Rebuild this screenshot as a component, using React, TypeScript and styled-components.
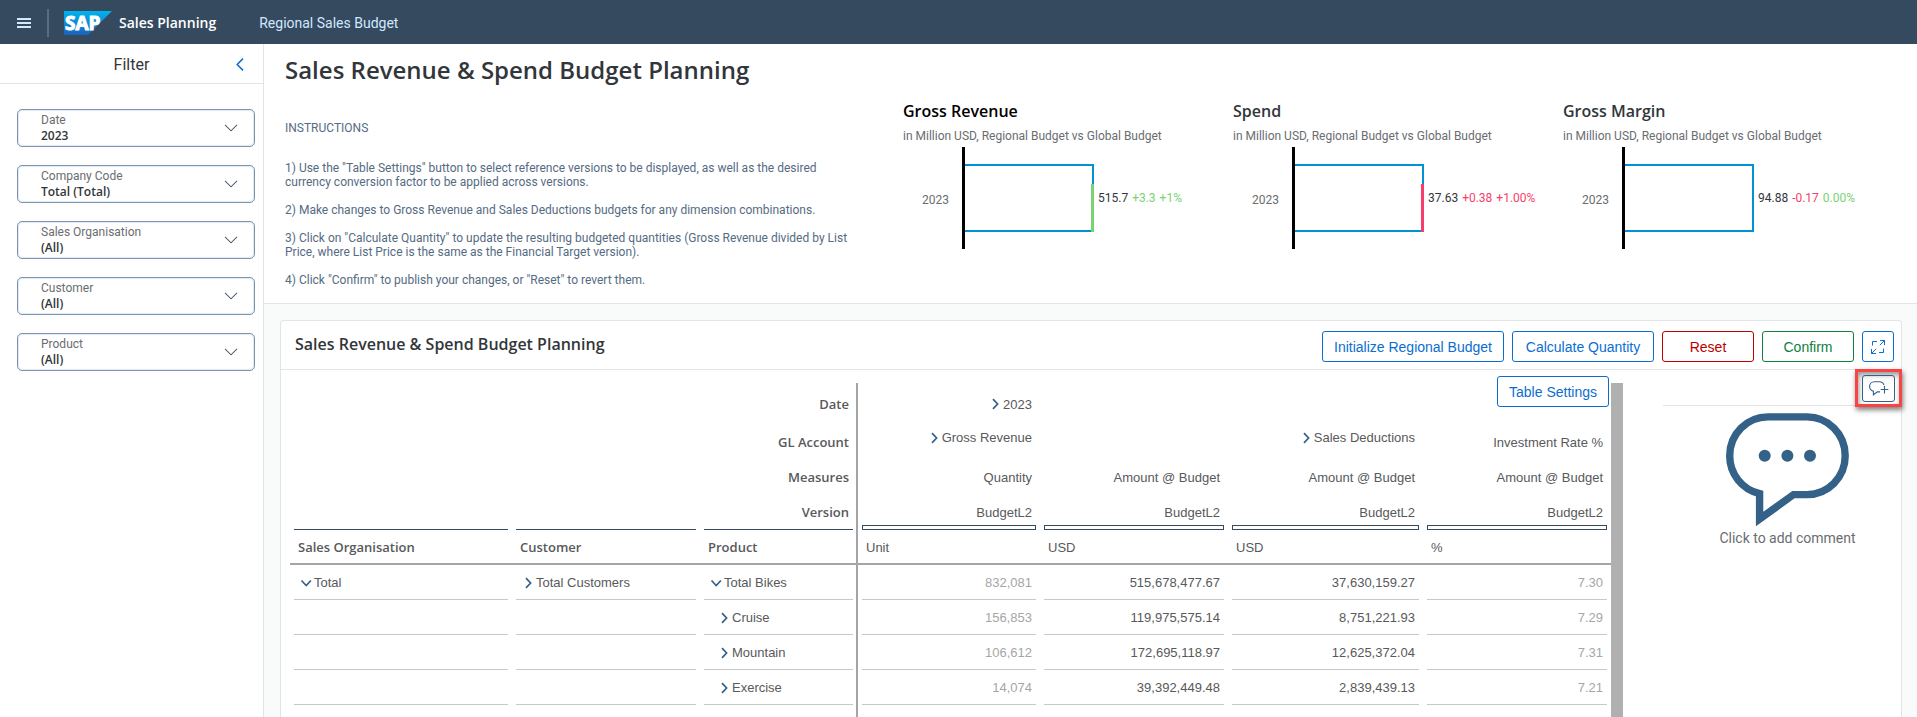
import React from 'react';
import styled, { createGlobalStyle, css } from 'styled-components';

const sans = 'Roboto, "Liberation Sans", sans-serif';
const headline = '"Open Sans", "Noto Sans", sans-serif';
const arial = '"Liberation Sans", Arial, sans-serif';

const color = {
  shell: '#354a5f',
  line: '#e2e4e5',
  canvas: '#f9fbfb',
  text: '#32363a',
  soft: '#6a6d70',
  slate: '#556b82',
  cell: '#58595b',
  muted: '#a6a6a6',
  rule: '#a5a5a5',
  icon: '#346187',
  blue: '#0a6ed1',
  red: '#bb0000',
  green: '#107e3e',
  bar: '#0092d1',
  good: '#7bd272',
  bad: '#f53f6a',
};

const GlobalStyle = createGlobalStyle`
  *, *::before, *::after { box-sizing: border-box; }
  body { margin: 0; background: ${color.canvas}; color: ${color.text}; font-family: ${sans}; }
  h1, h2, h3, p { margin: 0; }
  button, select { font: inherit; cursor: pointer; }
  svg { display: block; flex: none; }
`;

/* Shell bar */

const Page = styled.div`
  display: flex;
  flex-direction: column;
  min-height: 100vh;
`;

const ShellBar = styled.header`
  display: flex;
  align-items: center;
  height: 44px;
  padding: 2px 16px 0;
  background: ${color.shell};
`;

const MenuButton = styled.button`
  display: flex;
  padding: 1px;
  border: 0;
  background: none;
  color: #d1e8ff;
`;

const ShellDivider = styled.span`
  width: 2px;
  height: 28px;
  margin: 0 15px 0 15px;
  background: #5b6c7e;
`;

const ProductName = styled.span`
  margin-left: 7px;
  color: #fff;
  font: 600 14px/20px ${headline};
`;

const StoryName = styled.span`
  margin-left: 43px;
  color: #d1e8ff;
  font-size: 14px;
  line-height: 20px;
`;

const Workspace = styled.div`
  display: flex;
  flex: 1;
`;

/* Filter panel */

const Sidebar = styled.aside`
  flex: none;
  width: 264px;
  border-right: 1px solid ${color.line};
  background: #fff;
`;

const SidebarHeader = styled.div`
  display: grid;
  grid-template-columns: 1fr auto 1fr;
  align-items: center;
  height: 40px;
  padding: 3px 17px 0;
  border-bottom: 1px solid ${color.line};
`;

const SidebarTitle = styled.h2`
  grid-column: 2;
  font-size: 16px;
  font-weight: 400;
  line-height: 24px;
`;

const CollapseButton = styled.button`
  justify-self: end;
  padding: 0 2px 2px 0;
  border: 0;
  background: none;
  color: ${color.blue};
`;

const FilterList = styled.div`
  display: flex;
  flex-direction: column;
  gap: 18px;
  padding: 25px 8px 25px 17px;
`;

const FilterBox = styled.label`
  display: flex;
  align-items: center;
  height: 38px;
  padding: 0 16px 0 23px;
  border: 1px solid #7f93a8;
  border-radius: 5px;
  box-shadow: inset 0 0 1px 1px #dfeaf4;
  color: #51606f;
`;

const FilterText = styled.span`
  display: flex;
  flex: 1;
  flex-direction: column;
`;

const FilterName = styled.span`
  color: ${color.soft};
  font-size: 12px;
  line-height: 16px;
`;

const FilterSelect = styled.select`
  appearance: none;
  width: 100%;
  height: 16px;
  padding: 0;
  border: 0;
  background: none;
  color: ${color.text};
  font: 600 12px/16px ${headline};
`;

/* Summary */

const Main = styled.main`
  display: flex;
  flex: 1;
  flex-direction: column;
  min-width: 0;
`;

const Summary = styled.section`
  padding: 10px 24px 16px 21px;
  border-bottom: 1px solid ${color.line};
  background: #fff;
`;

const PageTitle = styled.h1`
  font: 600 24px/32px ${headline};
`;

const SummaryBody = styled.div`
  display: flex;
  align-items: flex-start;
`;

const Instructions = styled.div`
  flex: 0 1 618px;
  padding: 35px 40px 0 0;
  color: ${color.slate};
  font-size: 12px;
  line-height: 14px;
`;

const InstructionsLabel = styled.p`
  margin-bottom: 26px;
`;

const Steps = styled.div`
  display: flex;
  flex-direction: column;
  gap: 14px;
`;

const Charts = styled.div`
  display: grid;
  flex: 1;
  grid-template-columns: repeat(3, 1fr);
  padding-top: 15px;
`;

const ChartTitle = styled.h3<{ $dark?: boolean }>`
  color: ${(p) => (p.$dark ? '#000' : color.text)};
  font: 600 16px/20px ${headline};
`;

const ChartSubtitle = styled.p`
  margin: 7px 0 3px;
  color: ${color.soft};
  font-size: 12px;
  line-height: 16px;
`;

const Plot = styled.div`
  display: flex;
  align-items: center;
`;

const Category = styled.span`
  width: 59px;
  padding: 4px 13px 0 0;
  color: ${color.soft};
  font-size: 12px;
  line-height: 16px;
  text-align: right;
`;

const Figures = styled.span`
  display: flex;
  gap: 4px;
  margin-left: 4px;
  font-size: 12px;
  line-height: 16px;
`;

const Figure = styled.span<{ $tone?: 'good' | 'bad' }>`
  color: ${(p) => (p.$tone ? color[p.$tone] : color.text)};
`;

/* Planning card */

const CardArea = styled.div`
  display: flex;
  flex: 1;
  padding: 16px 15px 0 16px;
`;

const Card = styled.section`
  display: flex;
  flex: 1;
  flex-direction: column;
  min-width: 0;
  border: 1px solid ${color.line};
  border-bottom: 0;
  border-radius: 4px 4px 0 0;
  background: #fff;
`;

const CardHeader = styled.div`
  display: flex;
  align-items: flex-start;
  justify-content: space-between;
  height: 49px;
  padding: 10px 7px 0 14px;
  border-bottom: 1px solid ${color.line};
`;

const CardTitle = styled.h2`
  font: 600 16px/26px ${headline};
`;

const Actions = styled.div`
  display: flex;
  gap: 8px;
`;

const buttonWidths = { small: 92, medium: 142 };

const Button = styled.button<{ $tone?: 'red' | 'green'; $size?: keyof typeof buttonWidths }>`
  height: 31px;
  padding: 0 11px;
  border: 1px solid currentColor;
  border-radius: 3px;
  background: #fff;
  color: ${(p) => color[p.$tone ?? 'blue']};
  font: 400 14px/20px ${arial};
  white-space: nowrap;
  ${(p) => p.$size && css`min-width: ${buttonWidths[p.$size]}px;`}
`;

const IconButton = styled(Button)`
  display: flex;
  align-items: center;
  justify-content: center;
  width: 32px;
  padding: 0;
`;

const CardBody = styled.div`
  display: flex;
  flex: 1;
`;

const TableArea = styled.div`
  position: relative;
  flex: 1;
  min-width: 0;
  padding: 13px 0 0 9px;
`;

const TableSettings = styled(Button)`
  position: absolute;
  top: 6px;
  right: 2px;
`;

const ScrollTrack = styled.div`
  width: 12px;
  margin-top: 13px;
  background: #b0b0b0;
`;

const DataTable = styled.table`
  width: 100%;
  border-spacing: 0;
  table-layout: fixed;
  color: ${color.cell};
  font: 400 13px/17px ${arial};
`;

const Cell = styled.td<{ $divider?: boolean; $strong?: boolean; $tall?: boolean }>`
  height: ${(p) => (p.$tall ? 42 : 35)}px;
  padding: 0 ${(p) => (p.$divider ? 3 : 4)}px 0 4px;
  ${(p) => p.$divider && css`border-right: 2px solid ${color.rule};`}
  ${(p) => p.$strong && css`border-bottom: 2px solid ${color.rule};`}
`;

const FillerCell = styled(Cell)`
  height: 12px;
`;

const CellContent = styled.div<{
  $end?: boolean;
  $line?: 'light' | 'dark';
  $muted?: boolean;
  $bold?: boolean;
  $raised?: boolean;
  $boxed?: boolean;
}>`
  display: flex;
  flex-wrap: wrap;
  align-content: ${(p) => (p.$raised ? 'flex-start' : 'center')};
  justify-content: ${(p) => (p.$end ? 'flex-end' : 'flex-start')};
  height: ${(p) => (p.$boxed ? 30 : 35)}px;
  padding: ${(p) => (p.$raised ? 4 : p.$boxed ? 5 : p.$line ? 1 : 0)}px 4px 0;
  ${(p) => p.$line && css`border-bottom: 1px solid ${p.$line === 'dark' ? '#354a5f' : '#c8c8c8'};`}
  ${(p) => p.$muted && css`color: ${color.muted};`}
  ${(p) => p.$bold && css`font: 600 13px/17px ${headline};`}
`;

const HeadContent = styled(CellContent)`
  height: 33px;
  padding-top: 1px;
`;

const VersionBox = styled.div`
  height: 5px;
  border: 1px solid #354a5f;
`;

const Node = styled.span<{ $level?: number }>`
  display: inline-flex;
  align-items: center;
  margin-left: ${(p) => (p.$level ?? 0) * 8}px;
`;

/* Comments */

const CommentPanel = styled.aside`
  flex: none;
  width: 238px;
  margin-left: 40px;
`;

const CommentBar = styled.div`
  display: flex;
  justify-content: flex-end;
  height: 36px;
  border-bottom: 1px solid ${color.line};
`;

const Highlight = styled.div`
  display: flex;
  align-items: center;
  justify-content: center;
  width: 47px;
  height: 38px;
  margin: -1px -1px 0 0;
  border: 3px solid #fa4343;
  background: #fff;
  box-shadow: 1px 3px 5px rgba(0, 0, 0, 0.5), inset 1px 3px 5px rgba(0, 0, 0, 0.4);
`;

const CommentButton = styled(IconButton)`
  width: 33px;
  height: 27px;
  background: transparent;
  color: ${color.icon};
`;

const AddComment = styled.button`
  display: flex;
  flex-direction: column;
  align-items: center;
  gap: 1px;
  width: 100%;
  padding: 7px 0 0 11px;
  border: 0;
  background: none;
  color: ${color.soft};
  font-size: 14px;
  line-height: 20px;
`;

/* Icons */

const MenuIcon = () => (
  <svg width="14" height="12" viewBox="0 0 14 12" fill="currentColor">
    <path d="M0 1h14v2H0zM0 5h14v2H0zM0 9h14v2H0z" />
  </svg>
);

const SapLogo = () => (
  <svg width="48" height="24" viewBox="0 0 48 24" role="img" aria-label="SAP">
    <defs>
      <linearGradient id="sap" x1="0" y1="0" x2="0" y2="1">
        <stop offset="0" stopColor="#00b4ee" />
        <stop offset="1" stopColor="#1c61bd" />
      </linearGradient>
    </defs>
    <path d="M0 0H48L24 24H0Z" fill="url(#sap)" />
    <text x="1" y="19" fill="#fff" stroke="#fff" strokeWidth="1" fontFamily='"Open Sans", sans-serif' fontWeight="700" fontSize="19">
      SAP
    </text>
  </svg>
);

const CollapseIcon = () => (
  <svg width="8" height="13" viewBox="0 0 8 13" fill="none" stroke="currentColor" strokeWidth="1.5">
    <path d="M7 .6 1.2 6.5 7 12.4" />
  </svg>
);

const DropIcon = () => (
  <svg width="14" height="8" viewBox="0 0 14 8" fill="none" stroke="currentColor" strokeWidth="1.1">
    <path d="M1 .8 7 6.8 13 .8" />
  </svg>
);

const NodeIcon = ({ open }: { open?: boolean }) => (
  <svg width="16" height="16" viewBox="0 0 16 16" fill="none" stroke={color.icon} strokeWidth="1.7">
    <path d={open ? 'M3.5 5.5 8.2 10.6 12.9 5.5' : 'M6 3.2 10.6 8 6 12.8'} />
  </svg>
);

const ExpandIcon = () => (
  <svg width="14" height="14" viewBox="0 0 14 14" fill="none" stroke="currentColor" strokeWidth="1">
    <path d="M1.5 5.5V1.5H6M9 .5H13.5V5M13.5 .5 8.8 5.2M.5 9V13.5H5M.5 13.5 5.2 8.8M8 12.5H12.5V8.5" />
  </svg>
);

const CommentAddIcon = () => (
  <svg width="20" height="15" viewBox="0 0 20 15" fill="none" stroke="currentColor" strokeWidth="1.1">
    <path d="M15 4.2C14.4 2 12.8.8 10.5.8H5.5C2.5.8.6 3 .6 5.6.6 7.8 2 9.6 4.4 10.2V13.8L8.4 10.9H11" />
    <path d="M15.5 5V12.5M11.7 8.5H19.3" />
  </svg>
);

const BubbleIcon = () => (
  <svg width="123" height="114" viewBox="0 0 123 114">
    <path
      d="M33.6 106V80.6C16 76.4 3.7 61 3.7 42.8 3.7 21 21 3.9 42 3.9H81C102 3.9 119.2 21 119.2 42.8 119.2 64.5 102 81.6 81 81.6H67.5Z"
      fill="none"
      stroke={color.icon}
      strokeWidth="7.4"
    />
    <g fill={color.icon}>
      <circle cx="38.7" cy="42.8" r="6" />
      <circle cx="61.4" cy="42.8" r="6" />
      <circle cx="84" cy="42.8" r="6" />
    </g>
  </svg>
);

/* Data */

const filters = [
  { name: 'Date', value: '2023' },
  { name: 'Company Code', value: 'Total (Total)' },
  { name: 'Sales Organisation', value: '(All)' },
  { name: 'Customer', value: '(All)' },
  { name: 'Product', value: '(All)' },
];

type Tone = 'good' | 'bad';
type Kpi = { title: string; value: string; delta: string; deltaTone: Tone; pct: string; pctTone: Tone; marker?: Tone };

const kpis: Kpi[] = [
  { title: 'Gross Revenue', value: '515.7', delta: '+3.3', deltaTone: 'good', pct: '+1%', pctTone: 'good', marker: 'good' },
  { title: 'Spend', value: '37.63', delta: '+0.38', deltaTone: 'bad', pct: '+1.00%', pctTone: 'bad', marker: 'bad' },
  { title: 'Gross Margin', value: '94.88', delta: '-0.17', deltaTone: 'bad', pct: '0.00%', pctTone: 'good' },
];

const steps = [
  '1) Use the "Table Settings" button to select reference versions to be displayed, as well as the desired currency conversion factor to be applied across versions.',
  '2) Make changes to Gross Revenue and Sales Deductions budgets for any dimension combinations.',
  '3) Click on "Calculate Quantity" to update the resulting budgeted quantities (Gross Revenue divided by List Price, where List Price is the same as the Financial Target version).',
  '4) Click "Confirm" to publish your changes, or "Reset" to revert them.',
];

const columnWidths = [222, 188, 158, 182, 188, 195, 188];
const measures = ['Quantity', 'Amount @ Budget', 'Amount @ Budget', 'Amount @ Budget'];
const units = ['Unit', 'USD', 'USD', '%'];
const dimensions = ['Sales Organisation', 'Customer', 'Product'];

const rows = [
  { org: 'Total', customer: 'Total Customers', product: 'Total Bikes', values: ['832,081', '515,678,477.67', '37,630,159.27', '7.30'] },
  { product: 'Cruise', values: ['156,853', '119,975,575.14', '8,751,221.93', '7.29'] },
  { product: 'Mountain', values: ['106,612', '172,695,118.97', '12,625,372.04', '7.31'] },
  { product: 'Exercise', values: ['14,074', '39,392,449.48', '2,839,439.13', '7.21'] },
];

const KpiChart = ({ kpi, dark }: { kpi: Kpi; dark?: boolean }) => (
  <div>
    <ChartTitle $dark={dark}>{kpi.title}</ChartTitle>
    <ChartSubtitle>in Million USD, Regional Budget vs Global Budget</ChartSubtitle>
    <Plot>
      <Category>2023</Category>
      <svg width="132" height="102" viewBox="0 0 132 102">
        <rect x="2" y="18" width="129" height="66" fill="#fff" stroke={color.bar} strokeWidth="2" />
        {kpi.marker && <rect x="129" y="37" width="3" height="48" fill={color[kpi.marker]} />}
        <rect width="3" height="102" fill="#000" />
      </svg>
      <Figures>
        <Figure>{kpi.value}</Figure>
        <Figure $tone={kpi.deltaTone}>{kpi.delta}</Figure>
        <Figure $tone={kpi.pctTone}>{kpi.pct}</Figure>
      </Figures>
    </Plot>
  </div>
);

const HeaderLabel = ({ children, tall, line }: { children: string; tall?: boolean; line?: boolean }) => (
  <>
    {[0, 1].map((i) => (
      <Cell key={i} $tall={tall}>{line && <CellContent $line="dark" />}</Cell>
    ))}
    <Cell as="th" scope="row" $divider $tall={tall}>
      <CellContent $end $bold $line={line ? 'dark' : undefined}>{children}</CellContent>
    </Cell>
  </>
);

const PlanningTable = () => (
  <DataTable>
    <colgroup>
      {columnWidths.map((w, i) => (
        <col key={i} width={w} />
      ))}
    </colgroup>
    <thead>
      <tr>
        <HeaderLabel tall>Date</HeaderLabel>
        <Cell $tall>
          <CellContent $end><Node><NodeIcon />2023</Node></CellContent>
        </Cell>
        <Cell $tall colSpan={3} />
      </tr>
      <tr>
        <HeaderLabel>GL Account</HeaderLabel>
        <Cell>
          <CellContent $end $raised><Node><NodeIcon />Gross Revenue</Node></CellContent>
        </Cell>
        <Cell />
        <Cell>
          <CellContent $end $raised><Node><NodeIcon />Sales Deductions</Node></CellContent>
        </Cell>
        <Cell>
          <CellContent $end>Investment Rate %</CellContent>
        </Cell>
      </tr>
      <tr>
        <HeaderLabel>Measures</HeaderLabel>
        {measures.map((m, i) => (
          <Cell key={i}><CellContent $end>{m}</CellContent></Cell>
        ))}
      </tr>
      <tr>
        <HeaderLabel line>Version</HeaderLabel>
        {measures.map((_, i) => (
          <Cell key={i}>
            <CellContent $end $boxed>BudgetL2</CellContent>
            <VersionBox />
          </Cell>
        ))}
      </tr>
      <tr>
        {dimensions.map((d, i) => (
          <Cell as="th" scope="col" key={d} $strong $divider={i === 2}>
            <HeadContent $bold>{d}</HeadContent>
          </Cell>
        ))}
        {units.map((u, i) => (
          <Cell key={i} $strong><HeadContent>{u}</HeadContent></Cell>
        ))}
      </tr>
    </thead>
    <tbody>
      {rows.map((r) => (
        <tr key={r.product}>
          <Cell>
            <CellContent $line="light">{r.org && <Node><NodeIcon open />{r.org}</Node>}</CellContent>
          </Cell>
          <Cell>
            <CellContent $line="light">{r.customer && <Node><NodeIcon />{r.customer}</Node>}</CellContent>
          </Cell>
          <Cell $divider>
            <CellContent $line="light">
              <Node $level={r.org ? 0 : 1}><NodeIcon open={!!r.org} />{r.product}</Node>
            </CellContent>
          </Cell>
          {r.values.map((v, i) => (
            <Cell key={i}>
              <CellContent $line="light" $end $muted={i === 0 || i === 3}>{v}</CellContent>
            </Cell>
          ))}
        </tr>
      ))}
      <tr>
        <FillerCell colSpan={3} $divider />
        <FillerCell colSpan={4} />
      </tr>
    </tbody>
  </DataTable>
);

export default function App() {
  return (
    <Page>
      <GlobalStyle />
      <ShellBar>
        <MenuButton aria-label="Menu"><MenuIcon /></MenuButton>
        <ShellDivider />
        <SapLogo />
        <ProductName>Sales Planning</ProductName>
        <StoryName>Regional Sales Budget</StoryName>
      </ShellBar>
      <Workspace>
        <Sidebar>
          <SidebarHeader>
            <SidebarTitle>Filter</SidebarTitle>
            <CollapseButton aria-label="Collapse filters"><CollapseIcon /></CollapseButton>
          </SidebarHeader>
          <FilterList>
            {filters.map((f) => (
              <FilterBox key={f.name}>
                <FilterText>
                  <FilterName>{f.name}</FilterName>
                  <FilterSelect><option>{f.value}</option></FilterSelect>
                </FilterText>
                <DropIcon />
              </FilterBox>
            ))}
          </FilterList>
        </Sidebar>
        <Main>
          <Summary>
            <PageTitle>Sales Revenue &amp; Spend Budget Planning</PageTitle>
            <SummaryBody>
              <Instructions>
                <InstructionsLabel>INSTRUCTIONS</InstructionsLabel>
                <Steps>
                  {steps.map((s) => (
                    <p key={s}>{s}</p>
                  ))}
                </Steps>
              </Instructions>
              <Charts>
                {kpis.map((k, i) => (
                  <KpiChart key={k.title} kpi={k} dark={i === 0} />
                ))}
              </Charts>
            </SummaryBody>
          </Summary>
          <CardArea>
            <Card>
              <CardHeader>
                <CardTitle>Sales Revenue &amp; Spend Budget Planning</CardTitle>
                <Actions>
                  <Button>Initialize Regional Budget</Button>
                  <Button $size="medium">Calculate Quantity</Button>
                  <Button $tone="red" $size="small">Reset</Button>
                  <Button $tone="green" $size="small">Confirm</Button>
                  <IconButton aria-label="Full screen"><ExpandIcon /></IconButton>
                </Actions>
              </CardHeader>
              <CardBody>
                <TableArea>
                  <PlanningTable />
                  <TableSettings>Table Settings</TableSettings>
                </TableArea>
                <ScrollTrack />
                <CommentPanel>
                  <CommentBar>
                    <Highlight>
                      <CommentButton aria-label="Add comment"><CommentAddIcon /></CommentButton>
                    </Highlight>
                  </CommentBar>
                  <AddComment>
                    <BubbleIcon />
                    Click to add comment
                  </AddComment>
                </CommentPanel>
              </CardBody>
            </Card>
          </CardArea>
        </Main>
      </Workspace>
    </Page>
  );
}
